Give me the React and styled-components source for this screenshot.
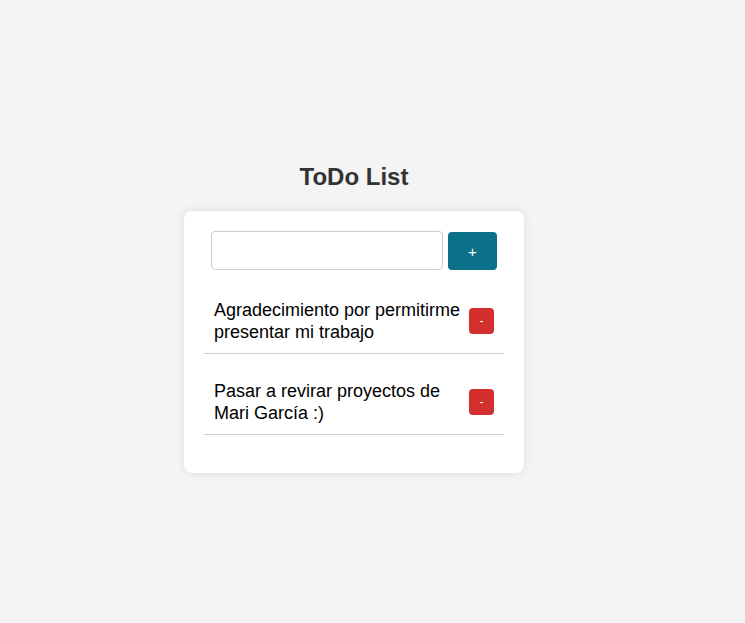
import React, { useState } from 'react'
import styled, { createGlobalStyle } from 'styled-components'

const GlobalStyle = createGlobalStyle`
  * {
    box-sizing: border-box;
  }
  body {
    margin: 0;
    background: #f4f4f4;
    font-family: 'Liberation Sans', Arial, sans-serif;
  }
`

const Page = styled.div`
  min-height: 100vh;
  display: flex;
  flex-direction: column;
  align-items: center;
  padding: 163px 37px 0 0;
`

const Title = styled.h2`
  margin: 0 0 20px;
  font-size: 24px;
  line-height: 28px;
  font-weight: 700;
  color: #333;
`

const Card = styled.div`
  width: 340px;
  padding: 20px 20px 22px;
  background: #fff;
  border-radius: 8px;
  box-shadow: 0 0 10px rgba(0, 0, 0, 0.1);
`

const Form = styled.form`
  display: flex;
  gap: 5px;
  padding: 0 7px;
`

const Input = styled.input`
  flex: 1;
  height: 39px;
  border: 1px solid #ccc;
  border-radius: 4px;
  padding: 0 10px;
  font-size: 16px;
  font-family: inherit;
  outline: none;
`

const Button = styled.button`
  border: none;
  border-radius: 4px;
  color: #fff;
  font-family: inherit;
  cursor: pointer;
  display: flex;
  align-items: center;
  justify-content: center;
  width: ${({ $size }) => ($size === 'small' ? '25px' : '49px')};
  height: ${({ $size }) => ($size === 'small' ? '26px' : '38px')};
  margin-top: ${({ $size }) => ($size === 'small' ? '0' : '1px')};
  font-size: ${({ $size }) => ($size === 'small' ? '12px' : '15px')};
  background: ${({ $variant }) => ($variant === 'danger' ? '#d32f2f' : '#0b7189')};
`

const List = styled.ul`
  list-style: none;
  margin: 19px 0 0;
  padding: 0;
`

const Item = styled.li`
  display: flex;
  align-items: center;
  justify-content: space-between;
  padding: 10px;
  border-bottom: 1px solid #ccc;
  margin-bottom: 16px;
`

const ItemText = styled.span`
  flex: 1;
  margin-right: 8px;
  font-size: 18px;
  line-height: 22px;
  color: #000;
`

export default function App() {
  const [tasks] = useState([
    'Agradecimiento por permitirme presentar mi trabajo',
    'Pasar a revirar proyectos de Mari García :)',
  ])

  return (
    <>
      <GlobalStyle />
      <Page>
        <Title>ToDo List</Title>
        <Card>
          <Form onSubmit={(e) => e.preventDefault()}>
            <Input type="text" />
            <Button type="submit">+</Button>
          </Form>
          <List>
            {tasks.map((task) => (
              <Item key={task}>
                <ItemText>{task}</ItemText>
                <Button $size="small" $variant="danger">
                  -
                </Button>
              </Item>
            ))}
          </List>
        </Card>
      </Page>
    </>
  )
}
